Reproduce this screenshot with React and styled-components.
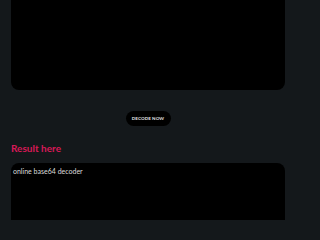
import React from 'react';
import styled, { createGlobalStyle } from 'styled-components';

const GlobalStyle = createGlobalStyle`
	html, body {
		margin: 0;
		padding: 0;
		background: #14181b;
		overflow: hidden;
	}
	* {
		box-sizing: border-box;
	}
`;

const StyledPage = styled.div`
	display: flex;
	flex-direction: column;
	width: 290px;
	height: 220px;
	padding: 0 5px 0 11px;
	background: #14181b;
	font-family: Lato, 'Liberation Sans', sans-serif;
`;

const StyledInputBox = styled.div`
	height: 90px;
	border-radius: 0 0 8px 8px;
	background: #000;
`;

const StyledActions = styled.div`
	display: flex;
	justify-content: center;
	padding: 21px 0 17px;
`;

const StyledButton = styled.button`
	width: 45px;
	height: 15px;
	padding: 0;
	border: none;
	border-radius: 8px;
	background: #000;
	color: #e6e6e6;
	font-family: Lato, 'Liberation Sans', sans-serif;
	font-size: 4.5px;
	font-weight: 700;
	letter-spacing: 0.1px;
	text-transform: uppercase;
`;

const StyledHeading = styled.h2`
	margin: 0 0 9px;
	color: #d81857;
	font-size: 10px;
	font-weight: 700;
	line-height: 11px;
`;

const StyledResult = styled.div`
	flex: 1;
	padding: 4px 2px;
	border-radius: 8px 8px 0 0;
	background: #000;
	color: #dcdcdc;
	font-size: 7px;
	line-height: 9px;
`;

export default function App() {
	return (
		<>
			<GlobalStyle />
			<StyledPage>
				<StyledInputBox />
				<StyledActions>
					<StyledButton>Decode now</StyledButton>
				</StyledActions>
				<StyledHeading>Result here</StyledHeading>
				<StyledResult>online base64 decoder</StyledResult>
			</StyledPage>
		</>
	);
}
